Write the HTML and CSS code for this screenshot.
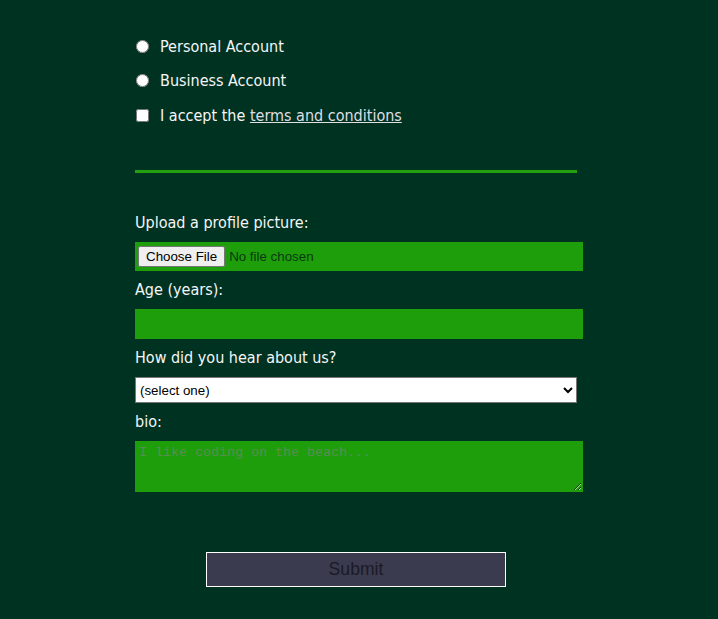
FILE: index.html
```html
<!DOCTYPE html>
<html lang="en">
<head>
<meta charset="utf-8">
<title>Registration Form</title>
<link rel="stylesheet" href="styles.css">
</head>
<body>
<form class="form" onsubmit="return false">
  <div class="group-choices">
    <label class="choice"><input class="inline" type="radio" name="account"><span>Personal Account</span></label>
    <label class="choice choice-mid"><input class="inline" type="radio" name="account"><span>Business Account</span></label>
    <label class="choice"><input class="inline" type="checkbox"><span>I accept the <a href="#" class="link">terms and conditions</a></span></label>
  </div>
  <div class="divider"></div>
  <div class="group-fields">
    <label class="field-label">Upload a profile picture:</label>
    <div class="file-box"><span class="file-btn">Choose File</span><span class="file-text">No file chosen</span></div>
    <label class="field-label">Age (years):</label>
    <input class="field-input" type="text">
    <label class="field-label">How did you hear about us?</label>
    <select class="field-select">
      <option>(select one)</option>
      <option>freeCodeCamp News</option>
      <option>freeCodeCamp YouTube Channel</option>
      <option>freeCodeCamp Forum</option>
      <option>Other</option>
    </select>
    <label class="field-label">bio:</label>
    <textarea class="field-textarea" placeholder="I like coding on the beach..."></textarea>
  </div>
  <button class="submit" type="submit">Submit</button>
</form>
</body>
</html>
```

FILE: styles.css
```css
html, body {
  margin: 0;
  padding: 0;
}
body {
  background-color: #003222;
  color: #f5f6f7;
  font-family: "DejaVu Sans Condensed", "DejaVu Sans", sans-serif;
  font-stretch: condensed;
  font-size: 16px;
  width: 718px;
  height: 619px;
  overflow: hidden;
}
.form {
  width: 442px;
  margin: 0 0 0 135px;
  padding-top: 29px;
}
.group-choices {
  display: flex;
  flex-direction: column;
}
.choice {
  display: flex;
  align-items: center;
  height: 34px;
}
.choice-mid {
  height: 35px;
}
.inline {
  margin: 0 11px 0 1px;
  width: 13px;
  height: 13px;
  flex: none;
}
.link {
  color: #dfdfe2;
}
.divider {
  height: 3px;
  background-color: #22a010;
  margin-top: 38px;
}
.group-fields {
  display: flex;
  flex-direction: column;
  gap: 9px;
  margin-top: 40px;
}
.field-label {
  display: block;
  height: 20px;
  line-height: 19px;
}
.file-box {
  width: 448px;
  height: 29px;
  box-sizing: border-box;
  background-color: #1f9e0b;
  display: flex;
  align-items: center;
  padding: 0 3px;
  font-family: "Liberation Sans", Arial, sans-serif;
  font-stretch: normal;
  font-size: 13.33px;
}
.file-btn {
  display: inline-block;
  height: 21px;
  line-height: 19px;
  box-sizing: border-box;
  padding: 0 7px;
  background: #efefef;
  color: #000;
  border: 1px solid #767676;
  border-radius: 2px;
  margin-right: 4px;
}
.file-text {
  color: #083a10;
}
.field-input {
  width: 448px;
  height: 30px;
  box-sizing: border-box;
  margin: 0;
  background-color: #1f9e0b;
  border: 1px solid #1f9e0b;
  color: #ffffff;
}
.field-select {
  width: 442px;
  height: 26px;
  box-sizing: border-box;
  margin: 0;
  font-family: "Liberation Sans", Arial, sans-serif;
  font-stretch: normal;
  font-size: 13.33px;
  background: #ffffff;
  color: #000;
  border: 1px solid #767676;
  border-radius: 0;
  padding: 0;
}
.field-textarea {
  width: 448px;
  height: 51px;
  box-sizing: border-box;
  margin: 0;
  background-color: #1f9e0b;
  border: 1px solid #1f9e0b;
  color: #ffffff;
  font-family: "Liberation Mono", monospace;
  font-stretch: normal;
  font-size: 13.33px;
  padding: 3px 3px 2px;
  resize: both;
}
.field-textarea::placeholder {
  color: #5c8d4f;
}
.submit {
  display: block;
  width: 300px;
  height: 35px;
  margin: 60px 0 0 71px;
  background-color: #3b3b4f;
  border: 1px solid #ffffff;
  color: #1a1a26;
  font-family: "Liberation Sans", Arial, sans-serif;
  font-stretch: normal;
  font-size: 17.6px;
  padding: 0;
}
```
